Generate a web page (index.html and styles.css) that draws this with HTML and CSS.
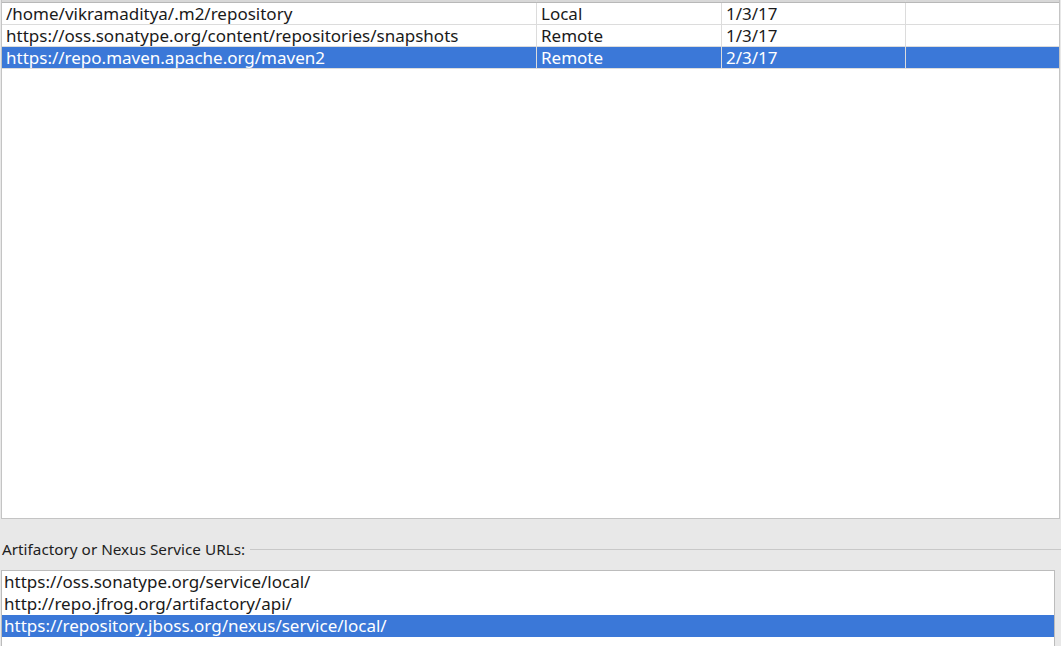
FILE: index.html
```html
<!DOCTYPE html>
<html lang="en">
<head>
    <meta charset="UTF-8">
    <title>Maven Repositories</title>
    <link rel="stylesheet" href="styles.css">
</head>
<body>
    <div class="repo-panel">
        <div class="repo-head">
            <div class="col-url"></div>
            <div class="col-type"></div>
            <div class="col-date"></div>
            <div class="col-extra"></div>
        </div>
        <div class="repo-row">
            <div class="col-url">/home/vikramaditya/.m2/repository</div>
            <div class="col-type">Local</div>
            <div class="col-date">1/3/17</div>
            <div class="col-extra"></div>
        </div>
        <div class="repo-row">
            <div class="col-url">https://oss.sonatype.org/content/repositories/snapshots</div>
            <div class="col-type">Remote</div>
            <div class="col-date">1/3/17</div>
            <div class="col-extra"></div>
        </div>
        <div class="repo-row selected">
            <div class="col-url">https://repo.maven.apache.org/maven2</div>
            <div class="col-type">Remote</div>
            <div class="col-date">2/3/17</div>
            <div class="col-extra"></div>
        </div>
    </div>

    <div class="service-section">
        <div class="service-label">
            <span>Artifactory or Nexus Service URLs:</span>
            <div class="service-rule"></div>
        </div>
        <div class="service-list">
            <div class="service-item">https://oss.sonatype.org/service/local/</div>
            <div class="service-item">http://repo.jfrog.org/artifactory/api/</div>
            <div class="service-item selected">https://repository.jboss.org/nexus/service/local/</div>
        </div>
    </div>
</body>
</html>
```

FILE: styles.css
```css
body {
    margin: 0;
    padding: 0;
    width: 1061px;
    height: 646px;
    overflow: hidden;
    background-color: #e8e8e8;
    font-family: 'Noto Sans', 'DejaVu Sans', sans-serif;
    font-size: 17px;
    color: #1a1a1a;
}
/* repository table */
.repo-panel {
    margin-left: 1px;
    width: 1059px;
    height: 519px;
    background-color: #ffffff;
    border-left: 1px solid #c4c4c4;
    border-right: 1px solid #c4c4c4;
    border-bottom: 1px solid #c4c4c4;
    box-sizing: border-box;
}
.repo-head {
    display: flex;
    height: 3px;
    background-color: #d8d8d8;
    border-bottom: 1px solid #b8b8b8;
    box-sizing: border-box;
}
.repo-row {
    display: flex;
    height: 22px;
    line-height: 21px;
    border-bottom: 1px solid #dcdcdc;
    box-sizing: border-box;
    white-space: nowrap;
}
.repo-row > div,
.repo-head > div {
    box-sizing: border-box;
    padding-left: 4px;
    border-right: 1px solid #dcdcdc;
    overflow: hidden;
}
.col-url { width: 535px; }
.col-type { width: 185px; }
.col-date { width: 184px; }
.col-extra { flex: 1; border-right: none !important; }
.repo-row.selected {
    background-color: #3b78d8;
    color: #ffffff;
}
/* service urls */
.service-section {
    padding-top: 20px;
}
.service-label {
    display: flex;
    align-items: center;
    height: 20px;
    padding-left: 2px;
    font-size: 15.3px;
    color: #1e1e1e;
}
.service-rule {
    flex: 1;
    height: 1px;
    margin-left: 5px;
    background-color: #c8c8c8;
}
.service-list {
    margin-top: 11px;
    margin-left: 1px;
    width: 1054px;
    height: 90px;
    background-color: #ffffff;
    border: 1px solid #bcbcbc;
    box-sizing: border-box;
}
.service-item {
    height: 22px;
    line-height: 22px;
    padding-left: 2px;
    white-space: nowrap;
}
.service-item.selected {
    background-color: #3b78d8;
    color: #ffffff;
}
```
